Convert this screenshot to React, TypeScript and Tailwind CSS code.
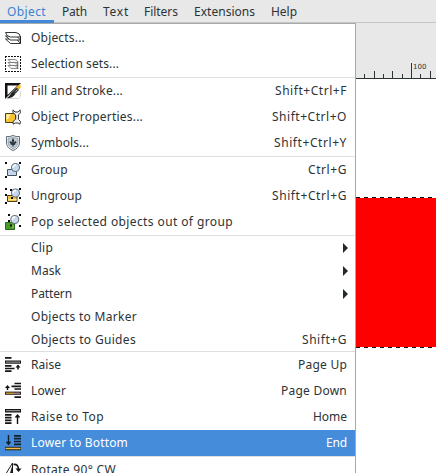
import type { ReactNode } from "react";

const Svg = ({ children }: { children: ReactNode }) => (
  <svg width="18" height="18" viewBox="0 0 18 18" className="shrink-0">{children}</svg>
);

const Layers = () => (
  <Svg>
    <g fill="#fff" stroke="#1b1f20" strokeWidth=".9" strokeLinejoin="round">
      <path d="M1.500 10h11l4 4.500H6.500z" />
      <path d="M1.500 7h11l4 4H6.500z" />
      <path d="M1.500 3.500h10.500q4 .5 4.500 4.500H6.500q-4-.5-5-4.500z" />
    </g>
    <path d="M16.500 7.500v7" stroke="#222" strokeWidth="1" />
  </Svg>
);

const SelectionSets = () => (
  <Svg>
    <path d="M1 1.500h16M1 16.500h16M1.500 1v16M16.500 1v16" stroke="#111" strokeWidth="1" strokeDasharray="2 1" fill="none" />
    <g fill="#f6f6f6" stroke="#6a7174" strokeWidth=".8">
      <path d="M4 10.500h7l3 3H7z" />
      <path d="M4 7.500h7l3 3H7z" />
      <path d="M4 4.500h7q2.500.5 3 3H7z" />
    </g>
    <path d="M13.700 7v7" stroke="#666" />
  </Svg>
);

const FillStroke = () => (
  <Svg>
    <path d="M1 1h16L1 17z" fill="#111" />
    <path d="M3.500 3.500h10L3.500 13z" fill="#fff" />
    <path d="M4 16.500h10.500l2-2V9" fill="none" stroke="#ccc" strokeWidth=".8" />
    <path d="M14 3.500l2.500-1.500v4l-2 2-3-2z" fill="#f2b719" />
    <path d="M12.500 5.500l2.500 2.500-4 4-2.500-2z" fill="#30373a" />
    <path d="M8.500 9.500l2.800 2.500q-2.300 4-8.800 4.500 3-2 6-7z" fill="#1d2123" />
    <path d="M11.500 9.500l2-2" stroke="#c8c8c8" strokeWidth=".8" />
  </Svg>
);

const Properties = () => (
  <Svg>
    <path d="M1.500 5.500h10v9h-10z" fill="#f6c430" stroke="#4c3d20" strokeWidth="1" />
    <path d="M2.300 6.300h4.500l-3 5h-1.500z" fill="#fff0a2" />
    <path d="M9 1.800v3l2.500 2v4.500L9 13.500l.2 2.700 2-1.200h2.800l2 1.200.5-2.700-2-2V6.800l2-2-.5-3-1.800 2.200h-3.200z" fill="#f2f2f2" stroke="#353a3c" strokeWidth="1" strokeLinejoin="round" />
    <path d="M12.800 7v4.500" stroke="#bbb" />
  </Svg>
);

const Symbols = () => (
  <Svg>
    <path d="M2.500 2.500Q6 3 9 1.500 12 3 15.500 2.500V9q-.3 5-6.500 7.500Q2.800 14 2.500 9z" fill="#fff" stroke="#626d76" strokeWidth="1" />
    <path d="M4 4q2.500.2 5-1 2.500 1.200 5 1v5q-.3 3.700-5 6-4.700-2.300-5-6z" fill="#bdcbd7" stroke="#7b8892" strokeWidth=".6" />
    <path d="M9 4l1.200 2.300L9.600 9Q10.500 6.800 12.300 7.500q.7 1.700-1.300 2.300l-1 .4L9 13.500l-1-3.300-1-.4q-2-.6-1.300-2.300Q7.500 6.800 8.400 9l-.6-2.700z" fill="#28323a" />
    <path d="M6.800 10.300h4.400" stroke="#28323a" />
  </Svg>
);

const Lens = ({ x, y }: { x: number; y: number }) => (
  <g transform={`translate(${x} ${y})`}>
    <circle r="4" fill="#c5d9ee" stroke="#69757e" strokeWidth="1.100" />
    <path d="M-2.500 .5q0-3 3-3" stroke="#fff" strokeWidth="1.300" fill="none" />
  </g>
);

const GroupIcon = () => (
  <Svg>
    <path d="M3.500 8.500h5.500l3.500 2v4h-9z" fill="#c4d7ee" stroke="#46525d" />
    <Lens x={11.500} y={6.500} />
    <path d="M1 1h2v2H1zM15 1h2v2h-2zM1 15h2v2H1zM15 15h2v2h-2z" fill="#080808" />
  </Svg>
);

const UngroupIcon = () => (
  <Svg>
    <path d="M3.500 8.500h9.500v6H3.500z" fill="#f4c23c" stroke="#4e4122" />
    <path d="M4.200 12.700h8.500" stroke="#fff09b" />
    <Lens x={11.500} y={6} />
    <path d="M1 1h2v2H1zM6 2h2v2H6zM15 1h2v2h-2zM1 7h2v2H1zM7 10h2v2H7zM15 10h2v2h-2zM1 15h2v2H1zM14 15h2v2h-2z" fill="#080808" />
  </Svg>
);

const PopIcon = () => (
  <Svg>
    <path d="M1.500 9.500h9v7h-9z" fill="#499a2d" stroke="#2c6420" />
    <path d="M8 12h2v3H8z" fill="#72bc45" />
    <Lens x={10.800} y={6.500} />
    <path d="M4 1h2v2H4zM15 1h2v2h-2zM4 7h2v2H4zM15 12h2v2h-2zM6 11.500h2v2H6z" fill="#080808" />
  </Svg>
);

const RaiseIcon = () => (
  <Svg>
    <path d="M1 1.900h6.500M1 9.900h6.500M1 12.500h9.500M1 15.200h6.500" stroke="#151515" strokeWidth="1.700" />
    <path d="M1 4.500h16v3.200H1z" fill="#161616" />
    <path d="M2 6.100h14" stroke="#aaa" />
    <path d="M14 13.500V10" stroke="#111" strokeWidth="1.500" />
    <path d="M11.500 11.500L14 8.500l2.500 3z" fill="#111" />
  </Svg>
);

const LowerIcon = () => (
  <Svg>
    <path d="M10.500 1.500H17M7.500 4.300H17M10.500 7H17M10.500 15.200H17" stroke="#151515" strokeWidth="1.700" />
    <path d="M1 9.600h16v3.200H1z" fill="#222" />
    <path d="M2 11.200h8" stroke="#efb22d" strokeWidth="1.200" />
    <path d="M10 11.200h6" stroke="#d9a9a0" />
    <path d="M3.500 8V4.500" stroke="#111" strokeWidth="1.500" />
    <path d="M1 6l2.500-3L6 6z" fill="#111" />
  </Svg>
);

const TopIcon = () => (
  <Svg>
    <path d="M1 1h16v3.500H1z" fill="#161616" />
    <path d="M2 2.700h14" stroke="#aaa" />
    <path d="M1 6.800h6.500M1 9.600h6.500M1 12.400h6.500M1 15.200h6.500" stroke="#151515" strokeWidth="1.700" />
    <path d="M13.500 16V7.500M11.500 9.500l2-2.500 2 2.500" stroke="#111" strokeWidth="1.400" fill="none" />
  </Svg>
);

const BottomIcon = () => (
  <Svg>
    <path d="M10 1.900h7M10 4.700h7M10 7.500h7M10 10.300h7" stroke="#10202f" strokeWidth="1.700" />
    <path d="M1 12.800h16v3.500H1z" fill="#222" />
    <path d="M1.500 14.500h15" stroke="#f3bd42" strokeWidth="1.500" />
    <path d="M4.500 1v9M2.500 7.800l2 2.500 2-2.500" stroke="#10202f" strokeWidth="1.400" fill="none" />
  </Svg>
);

const RotateIcon = () => (
  <Svg>
    <path d="M8.500 2v11.500H1.500z" fill="#fff" stroke="#222" strokeWidth="1" />
    <path d="M9 2v12H5.500z" fill="#161616" />
    <path d="M9.500 3.500q4.700-1 5 5" stroke="#111" strokeWidth="1.600" fill="none" />
    <path d="M11.500 7.500h6l-3 3.500z" fill="#111" />
    <path d="M10 13.500h6" stroke="#555" />
  </Svg>
);

type Item = { label: string; width: string; keys?: string; keysWidth?: string; icon?: ReactNode; sub?: boolean; active?: boolean };

const groups: Item[][] = [
  [
    { label: "Objects...", width: "54", icon: <Layers /> },
    { label: "Selection sets...", width: "88", icon: <SelectionSets /> },
  ],
  [
    { label: "Fill and Stroke...", width: "92", keys: "Shift+Ctrl+F", keysWidth: "72", icon: <FillStroke /> },
    { label: "Object Properties...", width: "112", keys: "Shift+Ctrl+O", keysWidth: "75", icon: <Properties /> },
    { label: "Symbols...", width: "58", keys: "Shift+Ctrl+Y", keysWidth: "73", icon: <Symbols /> },
  ],
  [
    { label: "Group", width: "37", keys: "Ctrl+G", keysWidth: "39", icon: <GroupIcon /> },
    { label: "Ungroup", width: "51", keys: "Shift+Ctrl+G", keysWidth: "75", icon: <UngroupIcon /> },
    { label: "Pop selected objects out of group", width: "202", icon: <PopIcon /> },
  ],
  [
    { label: "Clip", width: "22", sub: true },
    { label: "Mask", width: "30", sub: true },
    { label: "Pattern", width: "41", sub: true },
    { label: "Objects to Marker", width: "106" },
    { label: "Objects to Guides", width: "105", keys: "Shift+G", keysWidth: "45" },
  ],
  [
    { label: "Raise", width: "30", keys: "Page Up", keysWidth: "49", icon: <RaiseIcon /> },
    { label: "Lower", width: "35", keys: "Page Down", keysWidth: "66", icon: <LowerIcon /> },
    { label: "Raise to Top", width: "73", keys: "Home", keysWidth: "34", icon: <TopIcon /> },
    { label: "Lower to Bottom", width: "97", keys: "End", keysWidth: "21", icon: <BottomIcon />, active: true },
  ],
  [{ label: "Rotate 90° CW", width: "85", icon: <RotateIcon /> }],
];

// Spreads the glyphs so that a label fills its pixel width.
const Fit = ({ text, width, end = false }: { text: string; width: string; end?: boolean }) => (
  <span
    className={`block whitespace-pre ${end ? "ml-auto" : ""}`}
    ref={(el) => {
      if (!el) return;
      el.style.letterSpacing = "0px";
      el.style.width = "max-content";
      const natural = el.getBoundingClientRect().width;
      el.style.letterSpacing = `${(Number(width) - natural) / text.length}px`;
      el.style.width = `${width}px`;
    }}
  >
    {text}
  </span>
);

const menus = [
  { text: "Object", width: "39", cell: "w-[54px] pl-[7px] text-[#3d83d5]" },
  { text: "Path", width: "25", cell: "w-[41px] pl-2" },
  { text: "Text", width: "26", cell: "w-[41px] pl-2" },
  { text: "Filters", width: "34", cell: "w-[50px] pl-2" },
  { text: "Extensions", width: "61", cell: "w-[77px] pl-2" },
  { text: "Help", width: "26", cell: "w-[45px] pl-2" },
];

const ticks = ["h-1", "h-[7px]", "h-1", "h-[7px]", "h-1", "h-[15px]", "h-1", "h-[7px]"];
const gaps = ["ml-2", "ml-[9px]", "ml-2", "ml-2", "ml-[9px]", "ml-2", "ml-2", "ml-[9px]"];

export default function App() {
  return (
    <div className="flex h-[473px] w-[436px] flex-col overflow-hidden bg-white font-['Noto_Sans',sans-serif] text-[12px] leading-4 text-[#2c3335]">
      <nav className="flex h-[23px] shrink-0 border-b border-[#c6c6c6] bg-[#e8e8e8]">
        {menus.map((m, i) => (
          <div key={m.text} className={`h-[23px] shrink-0 pt-[4px] ${i === 0 ? "border-b-[3px] border-[#4289db]" : ""} ${m.cell}`}>
            <Fit text={m.text} width={m.width} />
          </div>
        ))}
      </nav>
      <div className="flex h-[450px]">
        <div className="h-[450px] w-[356px] shrink-0 overflow-hidden border-t border-r border-[#a7a9a9] bg-white pt-px">
          {groups.map((group, g) => (
            <div key={g} className={g ? "border-t border-[#dedfdf]" : ""}>
              {group.map((item) => (
                <div
                  key={item.label}
                  className={`flex items-center pl-1 pr-2 ${g === 3 ? "h-[23px]" : "h-[26px]"} ${item.active ? "bg-[#458cda] text-white" : ""}`}
                >
                  <div className="mr-[9px] flex w-[18px] shrink-0">{item.icon}</div>
                  <Fit text={item.label} width={item.width} />
                  {item.keys && <Fit text={item.keys} width={item.keysWidth!} end />}
                  {item.sub && (
                    <svg width="5" height="10" className="mr-[-1px] ml-auto">
                      <path d="M0 0L5 5 0 10z" fill="#222a2d" />
                    </svg>
                  )}
                </div>
              ))}
            </div>
          ))}
        </div>
        <main className="flex w-20 flex-col bg-white">
          <div className="flex h-14 shrink-0 items-end overflow-hidden border-b border-[#2c3335] bg-[#e8e8e8]">
            {ticks.map((height, i) => (
              <div key={i} className={`relative w-px shrink-0 bg-[#2c3335] ${height} ${gaps[i]}`}>
                {i === 5 && (
                  <span className="absolute -top-px left-[2px] font-['DejaVu_Sans',sans-serif] text-[7px] leading-[10px]">100</span>
                )}
              </div>
            ))}
          </div>
          <svg width="80" height="151" className="mt-[118px] shrink-0">
            <rect y="1" width="80" height="149" fill="#f00" />
            <path d="M0 .5h80M0 150.500h80" stroke="#111" strokeDasharray="4 4" />
          </svg>
        </main>
      </div>
    </div>
  );
}
